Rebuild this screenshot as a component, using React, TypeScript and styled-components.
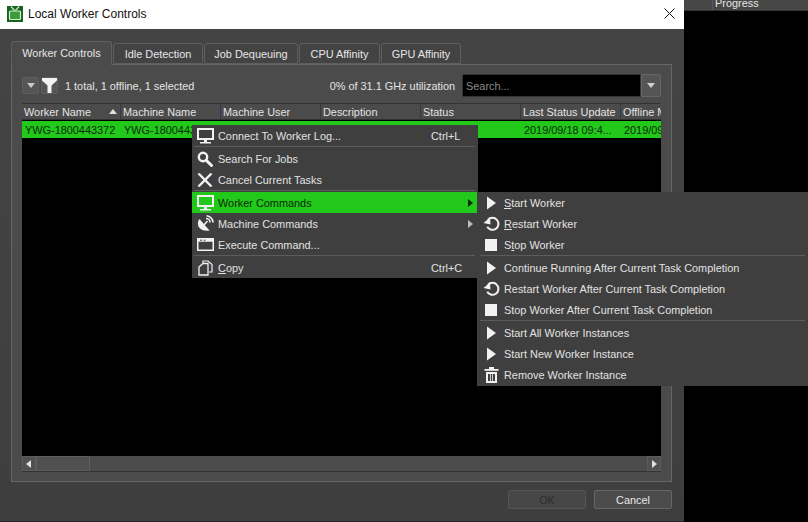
import { ReactNode } from "react";
import styled, { createGlobalStyle } from "styled-components";

const GlobalStyle = createGlobalStyle`
  html, body {
    margin: 0;
    padding: 0;
    width: 808px;
    height: 522px;
    overflow: hidden;
    background: #000;
  }
  * { box-sizing: border-box; }
`;

const Page = styled.div`
  position: relative;
  display: flex;
  width: 808px;
  height: 522px;
  overflow: hidden;
  font-family: "Liberation Sans", Arial, sans-serif;
  font-size: 10.9px;
  color: #e4e4e4;
`;

const Dialog = styled.div`
  display: flex;
  flex-direction: column;
  width: 684px;
  height: 522px;
  background: #414141;
  border-bottom: 1px solid #262626;
`;

const TitleBar = styled.div`
  display: flex;
  align-items: center;
  gap: 5px;
  height: 29px;
  padding: 0 9px 2px 7px;
  background: #fff;
  color: #111;
  font-size: 12px;
`;

const TitleText = styled.span`
  flex: 1;
`;

const Body = styled.div`
  flex: 1;
  display: flex;
  flex-direction: column;
  padding: 12px 12px 0 11px;
  background: linear-gradient(#444, #3e3e3e);
`;

const TabBar = styled.div`
  display: flex;
  align-items: flex-end;
  height: 24px;
  gap: 1px;
  position: relative;
  z-index: 1;
  margin-bottom: -1px;
`;

const Tab = styled.div<{ $active?: boolean; $width: number }>`
  display: flex;
  align-items: center;
  justify-content: center;
  width: ${(p) => p.$width}px;
  height: ${(p) => (p.$active ? 24 : 21)}px;
  margin-bottom: ${(p) => (p.$active ? 0 : 1)}px;
  padding-bottom: ${(p) => (p.$active ? 1 : 0)}px;
  border: 1px solid #5f5f5f;
  border-bottom: ${(p) => (p.$active ? "none" : "1px solid #5f5f5f")};
  border-radius: 3px 3px 0 0;
  background: ${(p) => (p.$active ? "#4b4b4b" : "#434343")};
  color: #e6e6e6;
`;

const Pane = styled.div`
  display: flex;
  flex-direction: column;
  width: 661px;
  height: 418px;
  padding: 9px 10px 9px 10px;
  border: 1px solid #666;
  background: #4b4b4b;
`;

const Toolbar = styled.div`
  display: flex;
  align-items: center;
  height: 23px;
  margin-bottom: 6px;
`;

const IconButton = styled.div`
  display: flex;
  align-items: center;
  justify-content: center;
  width: 17px;
  height: 17px;
  margin-right: 2px;
  border: 1px solid #5e5e5e;
  border-radius: 2px;
  background: #555;
`;

const Summary = styled.span`
  flex: 1;
  margin-left: 5px;
`;

const Utilization = styled.span`
  margin-right: 7px;
`;

const SearchField = styled.div`
  display: flex;
  align-items: center;
  width: 179px;
  height: 23px;
  padding-left: 3px;
  border: 1px solid #333;
  border-radius: 2px 0 0 2px;
  background: #000;
  color: #8a8a8a;
`;

const SearchDrop = styled.div`
  display: flex;
  align-items: center;
  justify-content: center;
  width: 20px;
  height: 23px;
  border: 1px solid #666;
  border-radius: 0 2px 2px 0;
  background: #555;
`;

const Table = styled.div`
  flex: 1;
  display: flex;
  flex-direction: column;
  width: 639px;
  border: 1px solid #333;
  border-width: 1px 0 1px 0;
  background: #000;
`;

const HeaderRow = styled.div`
  display: flex;
  flex: none;
  height: 16px;
  background: #4b4b4b;
  border-bottom: 1px solid #333;
  overflow: hidden;
`;

const HeaderCell = styled.div<{ $width: number }>`
  display: flex;
  align-items: center;
  justify-content: space-between;
  flex: none;
  width: ${(p) => p.$width}px;
  padding: 1px 2px 0 2px;
  border-right: 1px solid #3a3a3a;
  white-space: nowrap;
  overflow: hidden;
`;

const DataRow = styled.div`
  display: flex;
  flex: none;
  height: 17px;
  margin-top: 1px;
  background: #22c81a;
  color: #0c2a0a;
  overflow: hidden;
`;

const DataCell = styled.div<{ $width: number }>`
  flex: none;
  width: ${(p) => p.$width}px;
  padding: 3px 0 0 3px;
  white-space: nowrap;
  overflow: hidden;
`;

const RowsArea = styled.div`
  flex: 1;
`;

const ScrollBar = styled.div`
  display: flex;
  flex: none;
  height: 15px;
  background: #4c4c4c;
`;

const ScrollArrow = styled.div`
  display: flex;
  align-items: center;
  justify-content: center;
  width: 14px;
  border: 1px solid #5c5c5c;
  background: #505050;
`;

const ScrollThumb = styled.div`
  width: 54px;
  border: 1px solid #5f5f5f;
  background: #505050;
`;

const ScrollSpace = styled.div`
  flex: 1;
`;

const Footer = styled.div`
  display: flex;
  justify-content: flex-end;
  gap: 8px;
  margin-top: 8px;
`;

const FooterButton = styled.div<{ $disabled?: boolean }>`
  display: flex;
  align-items: center;
  justify-content: center;
  width: 78px;
  height: 19px;
  border: 1px solid ${(p) => (p.$disabled ? "#555" : "#666")};
  border-radius: 2px;
  background: ${(p) => (p.$disabled ? "#474747" : "#4b4b4b")};
  color: ${(p) => (p.$disabled ? "#2c2c2c" : "#e8e8e8")};
`;

const SidePanel = styled.div`
  flex: 1;
  background: #000;
`;

const SideHeader = styled.div`
  display: flex;
  height: 11px;
  background: #474747;
  border-bottom: 1px solid #333;
  overflow: hidden;
`;

const SideSpacer = styled.div`
  width: 29px;
  border-right: 1px solid #5a5a5a;
`;

const SideLabel = styled.div`
  padding-left: 2px;
  line-height: 10px;
  margin-top: -2px;
`;

const Menu = styled.div<{ $left: number; $top: number; $width: number }>`
  position: absolute;
  left: ${(p) => p.$left}px;
  top: ${(p) => p.$top}px;
  width: ${(p) => p.$width}px;
  background: #3f3f3f;
`;

const SubMenu = styled(Menu)`
  padding: 0 0 1px 1px;
`;

const MenuRow = styled.div<{ $selected?: boolean }>`
  display: flex;
  align-items: center;
  height: 21px;
  background: ${(p) => (p.$selected ? "#22c81a" : "transparent")};
  color: ${(p) => (p.$selected ? "#0c2a0a" : "#e2e2e2")};
`;

const MenuIcon = styled.span`
  display: flex;
  align-items: center;
  justify-content: center;
  flex: none;
  width: 26px;
`;

const MenuLabel = styled.span`
  flex: 1;
  white-space: nowrap;
`;

const Shortcut = styled.span`
  width: 47px;
  flex: none;
`;

const SubArrow = styled.span`
  display: flex;
  width: 13px;
  flex: none;
`;

const MenuSeparator = styled.div`
  height: 1px;
  margin: 0 3px 1px 2px;
  background: #5c5c5c;
`;

const Mnemonic = styled.span`
  text-decoration: underline;
  text-underline-offset: 1px;
`;

const White = "#f2f2f2";

const Triangle = ({ dir, color = "#e0e0e0" }: { dir: "down" | "up" | "left" | "right"; color?: string }) => {
  const points = {
    down: "1,2 9,2 5,7",
    up: "1,7 9,7 5,2",
    left: "7,1 7,9 2,5",
    right: "3,1 3,9 8,5",
  }[dir];
  return (
    <svg width="10" height="10" viewBox="0 0 10 10">
      <polygon points={points} fill={color} />
    </svg>
  );
};

const TvLogo = () => (
  <svg width="16" height="16" viewBox="0 0 16 16">
    <rect width="16" height="16" fill="#17641f" />
    <path d="M4 0.5 L7.5 4.5 M12 0.5 L8.5 4.5" stroke="#c4ecbe" strokeWidth="1.2" />
    <rect x="2.5" y="5" width="11" height="8.5" rx="1" fill="#3c9a3c" stroke="#d6f2d0" strokeWidth="1.2" />
  </svg>
);

const Monitor = ({ fill = "none" }: { fill?: string }) => (
  <svg width="17" height="16" viewBox="0 0 17 16">
    <rect x="1" y="1" width="15" height="10" fill={fill} stroke={White} strokeWidth="2" />
    <rect x="7" y="12" width="3" height="2" fill={White} />
    <rect x="3" y="14" width="11" height="1.5" fill={White} />
  </svg>
);

const SearchIcon = () => (
  <svg width="16" height="16" viewBox="0 0 16 16">
    <circle cx="6" cy="6" r="4.2" fill="none" stroke={White} strokeWidth="2.4" />
    <path d="M9.5 9.5 L14.5 14.5" stroke={White} strokeWidth="3" strokeLinecap="round" />
  </svg>
);

const CrossIcon = () => (
  <svg width="16" height="14" viewBox="0 0 16 14">
    <path d="M1.5 0.5 L14.5 13.5 M14.5 0.5 L1.5 13.5" stroke={White} strokeWidth="2.4" />
  </svg>
);

const DishIcon = () => (
  <svg width="17" height="17" viewBox="0 0 17 17">
    <path d="M2.5 4 C-1.5 9 2 17 12.5 15.5 Z" fill={White} />
    <path d="M6.5 10.5 L10.5 6" stroke={White} strokeWidth="1.5" />
    <path d="M9 3.5 A4 4 0 0 1 13 7.5 M9.5 0.8 A7 7 0 0 1 16 7.5" fill="none" stroke={White} strokeWidth="1.6" />
  </svg>
);

const WindowIcon = () => (
  <svg width="17" height="13" viewBox="0 0 17 13">
    <rect x="0.75" y="0.75" width="15.5" height="11.5" fill="none" stroke={White} strokeWidth="1.5" />
    <rect x="0.75" y="0.75" width="15.5" height="3" fill={White} />
    <path d="M3 2.2 H5 M6.5 2.2 H8.5" stroke="#3f3f3f" strokeWidth="1" />
  </svg>
);

const CopyIcon = () => (
  <svg width="15" height="16" viewBox="0 0 15 16">
    <path d="M5 3 V1 H10 L14 4.5 V12 H11" fill="none" stroke={White} strokeWidth="1.2" />
    <path d="M1 7 L5 3.5 H10 V15 H1 Z" fill="none" stroke={White} strokeWidth="1.3" />
  </svg>
);

const PlayIcon = () => (
  <svg width="11" height="14" viewBox="0 0 11 14">
    <polygon points="1,0.5 10,7 1,13.5" fill={White} />
  </svg>
);

const RestartIcon = () => (
  <svg width="17" height="16" viewBox="0 0 17 16">
    <path d="M5 3.8 A6 6 0 1 1 4.2 10.8" fill="none" stroke={White} strokeWidth="2" />
    <polygon points="0.5,7 7.5,8.5 7,1.5" fill={White} />
  </svg>
);

const StopIcon = () => (
  <svg width="12" height="12" viewBox="0 0 12 12">
    <rect width="12" height="12" fill={White} />
  </svg>
);

const TrashIcon = () => (
  <svg width="15" height="16" viewBox="0 0 15 16">
    <rect x="0.5" y="2" width="14" height="1.8" fill={White} />
    <rect x="5" y="0" width="5" height="2" fill={White} />
    <path d="M2 5 H13 V16 H2 Z M4 7 V14 H6 V7 Z M6.8 7 V14 H8.2 V7 Z M9 7 V14 H11 V7 Z" fill={White} fillRule="evenodd" />
  </svg>
);

const tabs = [
  { label: "Idle Detection", width: 90 },
  { label: "Job Dequeuing", width: 94 },
  { label: "CPU Affinity", width: 81 },
  { label: "GPU Affinity", width: 80 },
];

const columns = [
  { label: "Worker Name", width: 99, value: "YWG-1800443372" },
  { label: "Machine Name", width: 100, value: "YWG-1800443372" },
  { label: "Machine User", width: 100, value: "" },
  { label: "Description", width: 100, value: "" },
  { label: "Status", width: 100, value: "" },
  { label: "Last Status Update", width: 100, value: "2019/09/18 09:4..." },
  { label: "Offline Message", width: 100, value: "2019/09/18 09:4..." },
];

type RowProps = {
  icon: ReactNode;
  children: ReactNode;
  shortcut?: string;
  arrow?: string;
  selected?: boolean;
};

const Row = ({ icon, children, shortcut, arrow, selected }: RowProps) => (
  <MenuRow $selected={selected}>
    <MenuIcon>{icon}</MenuIcon>
    <MenuLabel>{children}</MenuLabel>
    {shortcut && <Shortcut>{shortcut}</Shortcut>}
    {arrow && (
      <SubArrow>
        <Triangle dir="right" color={arrow} />
      </SubArrow>
    )}
  </MenuRow>
);

export default function App() {
  return (
    <Page>
      <GlobalStyle />
      <Dialog>
        <TitleBar>
          <TvLogo />
          <TitleText>Local Worker Controls</TitleText>
          <svg width="11" height="11" viewBox="0 0 11 11">
            <path d="M0.5 0.5 L10.5 10.5 M10.5 0.5 L0.5 10.5" stroke="#111" strokeWidth="1" />
          </svg>
        </TitleBar>
        <Body>
          <TabBar>
            <Tab $active $width={101}>Worker Controls</Tab>
            {tabs.map((t) => (
              <Tab key={t.label} $width={t.width}>{t.label}</Tab>
            ))}
          </TabBar>
          <Pane>
            <Toolbar>
              <IconButton>
                <Triangle dir="down" color="#c8c8c8" />
              </IconButton>
              <IconButton>
                <svg width="15" height="15" viewBox="0 0 15 15">
                  <path d="M0 0 H15 V2.5 L9.5 7.5 V15 H5.5 V7.5 L0 2.5 Z" fill={White} />
                </svg>
              </IconButton>
              <Summary>1 total, 1 offline, 1 selected</Summary>
              <Utilization>0% of 31.1 GHz utilization</Utilization>
              <SearchField>Search...</SearchField>
              <SearchDrop>
                <Triangle dir="down" color="#d0d0d0" />
              </SearchDrop>
            </Toolbar>
            <Table>
              <HeaderRow>
                {columns.map((c, i) => (
                  <HeaderCell key={c.label} $width={c.width}>
                    {c.label}
                    {i === 0 && <Triangle dir="up" />}
                  </HeaderCell>
                ))}
              </HeaderRow>
              <DataRow>
                {columns.map((c) => (
                  <DataCell key={c.label} $width={c.width}>{c.value}</DataCell>
                ))}
              </DataRow>
              <RowsArea />
              <ScrollBar>
                <ScrollArrow>
                  <Triangle dir="left" />
                </ScrollArrow>
                <ScrollThumb />
                <ScrollSpace />
                <ScrollArrow>
                  <Triangle dir="right" />
                </ScrollArrow>
              </ScrollBar>
            </Table>
          </Pane>
          <Footer>
            <FooterButton $disabled>OK</FooterButton>
            <FooterButton>Cancel</FooterButton>
          </Footer>
        </Body>
      </Dialog>
      <SidePanel>
        <SideHeader>
          <SideSpacer />
          <SideLabel>Progress</SideLabel>
        </SideHeader>
      </SidePanel>

      <Menu $left={192} $top={125} $width={286}>
        <Row icon={<Monitor />} shortcut="Ctrl+L">Connect To Worker Log...</Row>
        <MenuSeparator />
        <Row icon={<SearchIcon />}>Search For Jobs</Row>
        <Row icon={<CrossIcon />}>Cancel Current Tasks</Row>
        <MenuSeparator />
        <Row icon={<Monitor fill="#22c81a" />} arrow="#0c2a0a" selected>Worker Commands</Row>
        <Row icon={<DishIcon />} arrow="#bdbdbd">Machine Commands</Row>
        <Row icon={<WindowIcon />}>Execute Command...</Row>
        <MenuSeparator />
        <Row icon={<CopyIcon />} shortcut="Ctrl+C"><Mnemonic>C</Mnemonic>opy</Row>
      </Menu>

      <SubMenu $left={477} $top={192} $width={331}>
        <Row icon={<PlayIcon />}><Mnemonic>S</Mnemonic>tart Worker</Row>
        <Row icon={<RestartIcon />}><Mnemonic>R</Mnemonic>estart Worker</Row>
        <Row icon={<StopIcon />}>S<Mnemonic>t</Mnemonic>op Worker</Row>
        <MenuSeparator />
        <Row icon={<PlayIcon />}>Continue Running After Current Task Completion</Row>
        <Row icon={<RestartIcon />}>Restart Worker After Current Task Completion</Row>
        <Row icon={<StopIcon />}>Stop Worker After Current Task Completion</Row>
        <MenuSeparator />
        <Row icon={<PlayIcon />}>Start All Worker Instances</Row>
        <Row icon={<PlayIcon />}>Start New Worker Instance</Row>
        <Row icon={<TrashIcon />}>Remove Worker Instance</Row>
      </SubMenu>
    </Page>
  );
}
